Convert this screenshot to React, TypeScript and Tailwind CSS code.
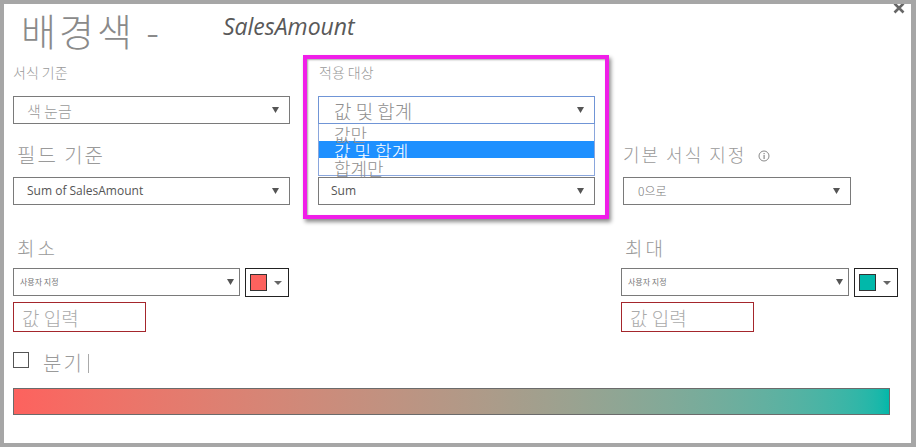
import React from "react";

const ko = "font-['Noto_Sans_CJK_KR','Noto_Sans',sans-serif]";
const latin = "font-['Open_Sans','Noto_Sans_CJK_KR',sans-serif]";

function Caret({ className = "" }: { className?: string }) {
  return (
    <svg width="7" height="6" viewBox="0 0 7 6" className={className}>
      <polygon points="0,0 7,0 3.5,6" fill="#555" />
    </svg>
  );
}

function Select({
  text,
  className = "",
  textClass = "",
  caretClass = "mr-[10px]",
  border = "border-[#7a7a7a]",
}: {
  text: string;
  className?: string;
  textClass?: string;
  caretClass?: string;
  border?: string;
}) {
  return (
    <div className={`flex h-[28px] items-center justify-between border bg-white ${border} ${className}`}>
      <span className={`leading-none whitespace-nowrap ${textClass}`}>{text}</span>
      <Caret className={caretClass} />
    </div>
  );
}

function Swatch({ color }: { color: string }) {
  return (
    <div className="flex h-[29px] w-[44px] items-center gap-[7px] border border-[#222] pl-[4px]">
      <div className="h-[17px] w-[17px] border border-[#333]" style={{ background: color }} />
      <svg width="8" height="4" viewBox="0 0 8 4">
        <polygon points="0,0 8,0 4,4" fill="#666" />
      </svg>
    </div>
  );
}

export default function App() {
  return (
    <div className="h-[447px] w-[916px] bg-[#a6a6a6] pb-[4px] pl-[4px] pr-[5px] pt-[4px]">
      <div className="relative h-full overflow-hidden bg-white pl-[9px]">
        {/* close */}
        <svg width="12" height="12" viewBox="0 0 12 12" className="absolute right-[6px] top-[-2px]">
          <path d="M1.5 1.5 L10.5 10.5 M10.5 1.5 L1.5 10.5" stroke="#666" strokeWidth="2.6" />
        </svg>

        {/* Title */}
        <div className="mt-[3px] flex h-[46px] items-start">
          <span className={`${ko} ml-[8px] text-[38px] font-light leading-[1.2] tracking-[3px] text-[#8a8a8a]`}>
            배경색 -
          </span>
          <span className={`${latin} ml-[61px] mt-[8px] text-[23px] italic leading-none text-[#595959]`}>
            SalesAmount
          </span>
        </div>

        {/* Row 1 */}
        <div className="mt-[12px] flex h-[14px] gap-[28px]">
          <div className={`${ko} w-[276px] text-[14px] font-light leading-none text-[#9a9a9a]`}>서식 기준</div>
          <div className={`${ko} w-[276px] pl-[2px] text-[14px] font-light leading-none text-[#9a9a9a]`}>적용 대상</div>
        </div>
        <div className="mt-[17px] flex gap-[28px]">
          <Select
            text="색 눈금"
            className="w-[277px]"
            textClass={`${ko} pl-[13px] text-[15px] font-light text-[#9a9a9a]`}
          />
          <div className="relative w-[277px]">
            <Select
              text="값 및 합계"
              border="border-[#7095d6]"
              textClass={`${ko} pl-[15px] text-[19px] font-light text-[#8f8f8f]`}
            />
            {/* open list */}
            <div className={`${ko} absolute left-0 top-full z-10 w-full border border-t-0 border-[#8aa6dc] bg-white text-[18px] font-light`}>
              <div className="h-[17px] pl-[15px] pt-[2px] leading-[17px] text-[#8f8f8f]">값만</div>
              <div className="h-[17px] bg-[#1e90ff] pl-[15px] pt-[2px] leading-[17px] text-white">값 및 합계</div>
              <div className="h-[17px] pl-[15px] pt-[2px] leading-[17px] text-[#8f8f8f]">합계만</div>
            </div>
          </div>
        </div>

        {/* Row 2 */}
        <div className="mt-[21px] flex h-[20px] items-start gap-[28px]">
          <div className={`${ko} w-[276px] pl-[4px] text-[20px] font-light leading-none tracking-[2px] text-[#9a9a9a]`}>
            필드 기준
          </div>
          <div className="w-[276px]" />
          <div className="flex items-center">
            <span className={`${ko} pl-[2px] text-[18px] font-light leading-none tracking-[2px] text-[#9a9a9a]`}>
              기본 서식 지정
            </span>
            <svg width="12" height="12" viewBox="0 0 12 12" className="ml-[12px] mt-[4px]">
              <circle cx="6" cy="6" r="5" fill="none" stroke="#8a8a8a" strokeWidth="1" />
              <rect x="5.5" y="5" width="1.2" height="4" fill="#8a8a8a" />
              <rect x="5.5" y="3" width="1.2" height="1.2" fill="#8a8a8a" />
            </svg>
          </div>
        </div>
        <div className="mt-[12px] flex gap-[28px]">
          <Select
            text="Sum of SalesAmount"
            className="w-[277px]"
            textClass={`${latin} pl-[13px] text-[12px] text-[#555]`}
          />
          <Select text="Sum" className="w-[277px]" textClass={`${latin} pl-[12px] text-[12px] text-[#555]`} />
          <Select
            text="0으로"
            className="w-[228px]"
            textClass={`${ko} pl-[14px] text-[12px] font-light text-[#7a7a7a]`}
          />
        </div>

        {/* Row 3 */}
        <div className="mt-[33px] flex h-[19px] items-start gap-[28px]">
          <div className={`${ko} w-[276px] pl-[4px] text-[19px] font-light leading-none tracking-[3px] text-[#9a9a9a]`}>최소</div>
          <div className="w-[276px]" />
          <div className={`${ko} pl-[4px] text-[19px] font-light leading-none tracking-[3px] text-[#9a9a9a]`}>최대</div>
        </div>
        <div className="mt-[11px] flex gap-[28px]">
          <div className="w-[276px]">
            <div className="flex gap-[5px]">
              <Select
                text="사용자 지정"
                className="w-[228px]"
                caretClass="mr-[5px]"
                textClass={`${ko} pl-[6px] text-[8px] text-[#777]`}
              />
              <Swatch color="#fd625e" />
            </div>
            <div className="mt-[5px] flex h-[30px] w-[133px] items-center border border-[#a4262c] pl-[8px]">
              <span className={`${ko} text-[19px] font-light leading-none text-[#aaa]`}>값 입력</span>
            </div>
          </div>
          <div className="w-[276px]" />
          <div>
            <div className="flex gap-[5px]">
              <Select
                text="사용자 지정"
                className="w-[228px]"
                caretClass="mr-[5px]"
                textClass={`${ko} pl-[6px] text-[8px] text-[#777]`}
              />
              <Swatch color="#01b8aa" />
            </div>
            <div className="mt-[5px] flex h-[30px] w-[133px] items-center border border-[#a4262c] pl-[8px]">
              <span className={`${ko} text-[19px] font-light leading-none text-[#aaa]`}>값 입력</span>
            </div>
          </div>
        </div>

        {/* Diverging */}
        <div className="mt-[20px] flex h-[21px] items-start">
          <div className="h-[16px] w-[16px] border border-[#555]" />
          <span className={`${ko} ml-[14px] mt-[1px] text-[20px] font-light leading-none tracking-[2px] text-[#9a9a9a]`}>
            분기
          </span>
          <span className="ml-[4px] mt-[2px] h-[19px] w-px bg-[#aaa]" />
        </div>

        {/* Gradient */}
        <div className="mt-[15px] h-[27px] w-[877px] border border-[#6b6b6b] bg-gradient-to-r from-[#fd625e] to-[#01b8aa]" />

        {/* highlight */}
        <div className="pointer-events-none absolute left-[299px] top-[51px] h-[164px] w-[306px] border-4 border-[#f01ee8] shadow-[2px_3px_4px_rgba(0,0,0,0.45),inset_1px_1px_2px_rgba(0,0,0,0.35)]" />
      </div>
    </div>
  );
}
